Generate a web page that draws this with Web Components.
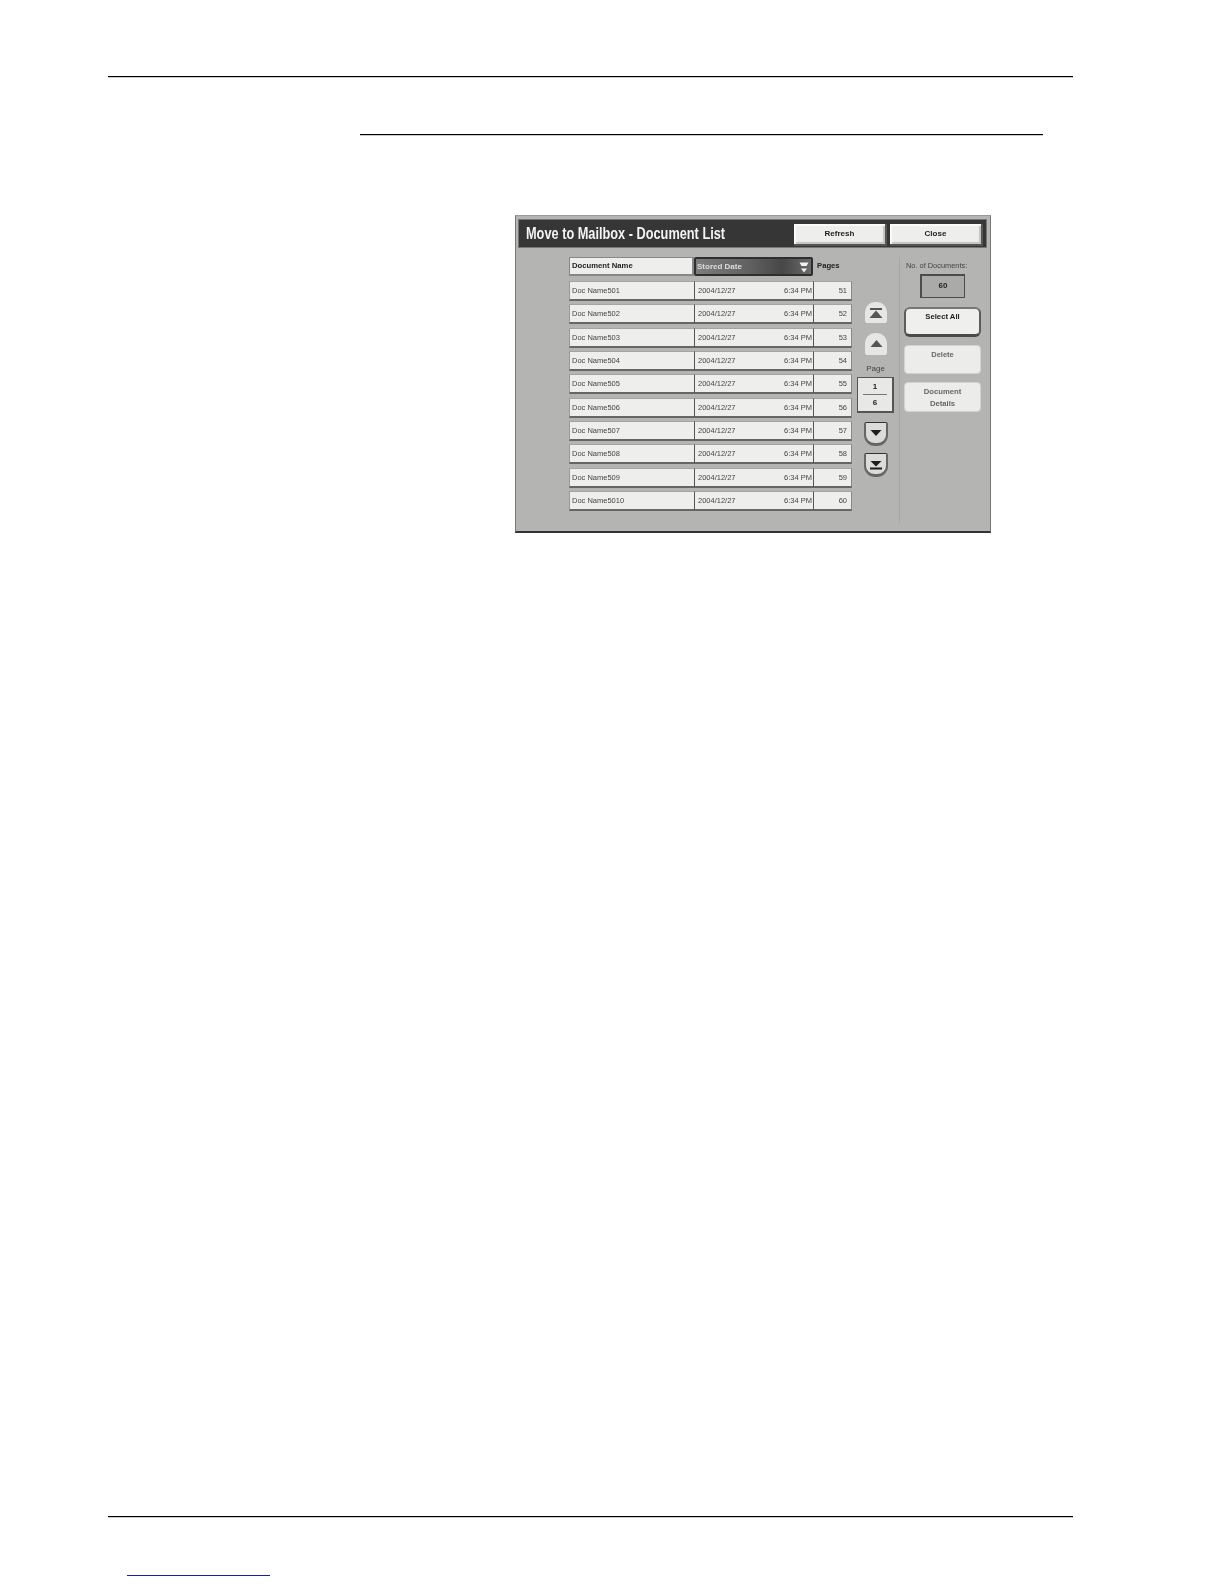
<!DOCTYPE html>
<html><head><meta charset="utf-8">
<style>
html,body{margin:0;padding:0;background:#fff}
body{width:1224px;height:1584px;font-family:"Liberation Sans",Arial,sans-serif}
</style></head><body>
<manual-page>
  <mailbox-dialog></mailbox-dialog>
</manual-page>
<script>
function el(name, html){
  customElements.define(name, class extends HTMLElement{
    constructor(){super();this.attachShadow({mode:'open'}).innerHTML=html;}
  });
}
el('manual-page',`<style>
:host{display:flex;flex-direction:column;width:1224px;height:1584px;box-sizing:border-box;padding-top:76px}
.top{height:1px;background:#000;box-shadow:0 1px 0 #ccc;margin:0 151px 0 108px}
.sub{height:1px;background:#000;box-shadow:0 1px 0 #ccc;margin:57px 181px 0 360px}
.fig{margin:80px 0 0 515px;flex:1}
.bot{height:1px;background:#000;box-shadow:0 1px 0 #ccc;margin:0 151px 0 108px}
.link{height:1px;background:#1c1c9e;margin:58px 0 8px 127px;width:143px}
</style><div class="top"></div><div class="sub"></div><div class="fig"><slot></slot></div><div class="bot"></div><div class="link"></div>`);

el('ui-button',`<style>
:host{display:flex;align-items:center;justify-content:center;box-sizing:border-box;text-align:center;
font:700 8px/11.7px "Liberation Sans",sans-serif;color:#222;background:#eeeeec;
border:1px solid #d2d2d0;border-radius:4px}
:host([kind=bar]){border:none;border-radius:0;background:#eeeeec;box-shadow:inset 2px 2px 1px #fbfbfb,inset -2px -2px 1px #c4c4c2,1px 1px 0 1px #555}
:host([kind=sel]){border:2px solid #5c5c5c;border-bottom:3px solid #4a4a4a;border-top-color:#777;border-radius:6px;background:#efefed;align-items:flex-start;padding-top:2px;font-size:7.7px}
:host([kind=dim]){color:#666;font-size:7.5px;background:#ececea;align-items:flex-start;padding-top:3px}
:host([kind=dim2]){color:#666;font-size:7.7px;background:#ececea;padding-top:1px}
</style><slot></slot>`);

el('doc-row',`<style>
:host{display:grid;grid-template-columns:125px 119px 39px;height:19px;font:400 7.5px/17px "Liberation Sans",sans-serif;color:#444}
div{box-sizing:border-box;background:#eeeeec;border-top:1px solid #a4a4a2;border-bottom:2px solid #666;border-left:1px solid #999;white-space:nowrap}
.n{padding-left:2px}
.d{display:flex;justify-content:space-between;padding:0 1px 0 3px;border-left:1px solid #555}
.p{text-align:right;padding-right:4px;border-left:1px solid #555;border-right:1px solid #888}
</style><div class="n"><slot name="n"></slot></div><div class="d"><span><slot name="d"></slot></span><span><slot name="t"></slot></span></div><div class="p"><slot name="p"></slot></div>`);

el('round-btn',`<style>
:host{display:block;box-sizing:border-box;flex:none}
:host([dir=up]){width:22px;background:#e6e6e4;border-radius:10px 10px 2px 2px}
:host([dir=down]){width:24px;height:24px;border:2px solid #666;border-top:1px solid #333;border-bottom-width:3px;border-radius:2px 2px 11px 11px;background:#dcdcda}
::slotted(svg){display:block;width:100%;height:100%}
</style><slot></slot>`);

el('page-box',`<style>
:host{display:flex;flex-direction:column;align-items:center;box-sizing:border-box;width:37px;height:36px;background:#e8e8e6;border:1px solid #555;border-width:1px 2px 2px 1px;font:700 8px/14px "Liberation Sans",sans-serif;color:#222;padding-top:2px}
i{display:block;width:24px;height:1px;background:#777;margin:0 0 1px;flex:none}
</style><slot name="a"></slot><i></i><slot name="b"></slot>`);

el('mailbox-dialog',`<style>
:host{display:block;box-sizing:border-box;width:476px;height:318px;background:#b4b4b2;border:1px solid #777;border-top-color:#999;border-bottom:2px solid #333;padding:4px 4px 0 3px;filter:blur(.35px);color:#333}
.title{display:flex;align-items:center;height:27px;background:#363636;box-sizing:border-box;padding:0 5px 0 7px;gap:5px;box-shadow:0 0 0 1px #777}
h1{flex:1;margin:1px 0 0;font:700 16px/1 "Liberation Sans",sans-serif;color:#f4f4f4;white-space:nowrap;transform:scaleX(.797);transform-origin:left center}
.title ui-button{width:91px;height:20px;flex:none}
.body{display:flex;padding:10px 0 0 50px;box-sizing:border-box}
.list{width:283px;display:flex;flex-direction:column;flex:none}
.head{display:grid;grid-template-columns:125px 119px 39px;height:18px;margin-bottom:6px;font:700 7.7px/16px "Liberation Sans",sans-serif}
.head>div{box-sizing:border-box;white-space:nowrap}
.h1{background:#eeeeec;border:1px solid #888;border-width:1px 2px 2px 1px;color:#222;padding-left:2px}
.h2{display:flex;justify-content:space-between;align-items:center;background:linear-gradient(90deg,#7c7c7c,#626262 45%,#474747 75%,#6a6a6a);border:2px solid #2e2e2e;border-radius:2px;color:#ddd;font-size:8px;padding-left:1px;line-height:14px}
.h2 svg{flex:none;margin-right:2px}
.h3{padding-left:4px;color:#222;line-height:18px}
.rows{display:flex;flex-direction:column;gap:4.33px}
.scroll{width:37px;margin-left:5px;flex:none;display:flex;flex-direction:column;align-items:center;padding-top:45px;font:400 8px/11px "Liberation Sans",sans-serif;color:#444}
.u1{height:21px;margin-bottom:10px}.u2{height:22px;margin-bottom:8px}
.lbl{margin-bottom:3px}
.d1{margin:9px 0 7px}
.side{width:87px;margin-left:5px;flex:none;border-left:1px solid #a6a6a4;height:266px;box-sizing:border-box;padding:3px 0 0 4px;display:flex;flex-direction:column;align-items:flex-start;font:400 7.4px/11px "Liberation Sans",sans-serif;color:#444}
.side>*{flex:none}
.side span{margin-left:2px;white-space:nowrap}
.count{box-sizing:border-box;width:45px;height:24px;margin:3px 0 0 16px;border:1px solid #4c4c4c;border-width:2px 1px 1px 2px;background:#aaaaa8;font:700 8px/20px "Liberation Sans",sans-serif;text-align:center;color:#222}
.side ui-button{width:77px}
.sel{height:30px;margin-top:9px}
.del{height:29px;margin-top:8px}
.det{height:30px;margin-top:8px}
</style>
<div class="title"><h1>Move to Mailbox - Document List</h1><ui-button kind="bar">Refresh</ui-button><ui-button kind="bar">Close</ui-button></div>
<div class="body">
 <div class="list">
  <div class="head"><div class="h1">Document Name</div><div class="h2"><span>Stored Date</span><svg width="10" height="14" viewBox="0 0 10 14"><path d="M.5 2.500h9l-2 3.500h-5zM2 8.500h6l-3 4z" fill="#f2f2f2"/></svg></div><div class="h3">Pages</div></div>
  <div class="rows" id="rows"></div>
 </div>
 <div class="scroll">
  <round-btn dir="up" class="u1"><svg viewBox="0 0 22 21"><path d="M5 6h12v2H5zM11 8.500l6.500 7.500h-13z" fill="#555"/></svg></round-btn>
  <round-btn dir="up" class="u2"><svg viewBox="0 0 22 22"><path d="M11.500 7l6 7h-12z" fill="#555"/></svg></round-btn>
  <span class="lbl">Page</span>
  <page-box><span slot="a">1</span><span slot="b">6</span></page-box>
  <round-btn dir="down" class="d1"><svg viewBox="0 0 20 20"><path d="M4.500 7h11l-5.500 6z" fill="#1e1e1e"/></svg></round-btn>
  <round-btn dir="down"><svg viewBox="0 0 20 20"><path d="M4.500 7h11l-5.500 5.500zM4 13.500h12v2H4z" fill="#1e1e1e"/></svg></round-btn>
 </div>
 <div class="side">
  <span>No. of Documents:</span>
  <div class="count">60</div>
  <ui-button kind="sel" class="sel">Select All</ui-button>
  <ui-button kind="dim" class="del">Delete</ui-button>
  <ui-button kind="dim2" class="det">Document<br>Details</ui-button>
 </div>
</div>`);

const host=document.querySelector('mailbox-dialog').shadowRoot.getElementById('rows');
for(let i=1;i<=10;i++){
  const r=document.createElement('doc-row');
  r.innerHTML=`<span slot="n">Doc Name50${i}</span><span slot="d">2004/12/27</span><span slot="t">6:34 PM</span><span slot="p">${50+i}</span>`;
  host.appendChild(r);
}
</script>
</body></html>
